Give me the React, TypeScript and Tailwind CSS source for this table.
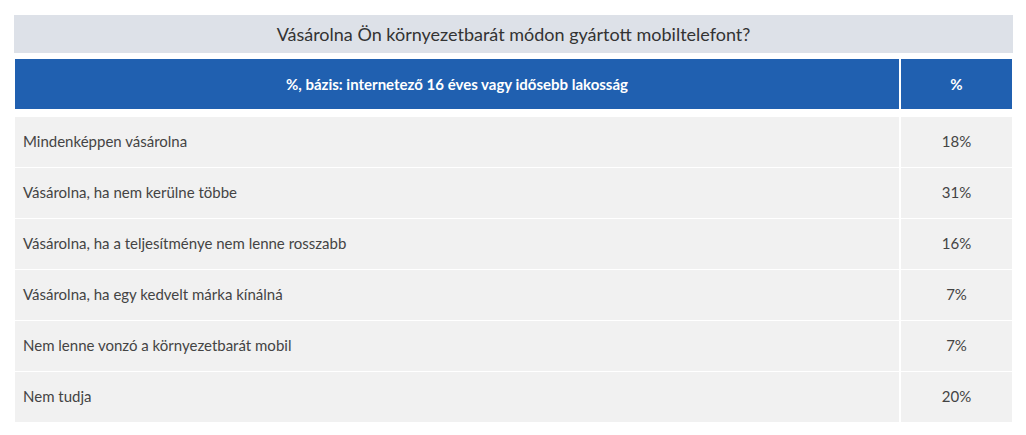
const rows = [
  { label: 'Mindenképpen vásárolna', value: '18%' },
  { label: 'Vásárolna, ha nem kerülne többe', value: '31%' },
  { label: 'Vásárolna, ha a teljesítménye nem lenne rosszabb', value: '16%' },
  { label: 'Vásárolna, ha egy kedvelt márka kínálná', value: '7%' },
  { label: 'Nem lenne vonzó a környezetbarát mobil', value: '7%' },
  { label: 'Nem tudja', value: '20%' },
];

export default function App() {
  return (
    <div className="w-[1026px] h-[435px] bg-white pl-[15px] pr-[14px] pt-[15px] font-['Lato','Liberation_Sans',sans-serif]">
      {/* kérdés */}
      <div className="h-[38px] bg-[#dde1e8] flex items-center justify-center text-[18px] text-[#333] ml-[-1px] mr-[-1px]">
        Vásárolna Ön környezetbarát módon gyártott mobiltelefont?
      </div>

      {/* fejléc */}
      <div className="mt-[6px] grid grid-cols-[884px_1fr] gap-x-[2px] h-[50px]">
        <div className="bg-[#2060b0] text-white font-bold text-[15px] flex items-center justify-center">
          %, bázis: internetező 16 éves vagy idősebb lakosság
        </div>
        <div className="bg-[#2060b0] text-white font-bold text-[15px] flex items-center justify-center">
          %
        </div>
      </div>

      {/* sorok */}
      <div className="mt-[8px] grid grid-cols-[884px_1fr] gap-x-[2px] gap-y-[1px]">
        {rows.map(r => (
          <div key={r.label} className="contents">
            <div className="h-[50px] bg-[#f1f1f1] flex items-center pl-[8px] pb-[2px] text-[15px] text-[#444]">
              {r.label}
            </div>
            <div className="h-[50px] bg-[#f1f1f1] flex items-center justify-center pb-[2px] text-[15px] text-[#444]">
              {r.value}
            </div>
          </div>
        ))}
      </div>
    </div>
  );
}
